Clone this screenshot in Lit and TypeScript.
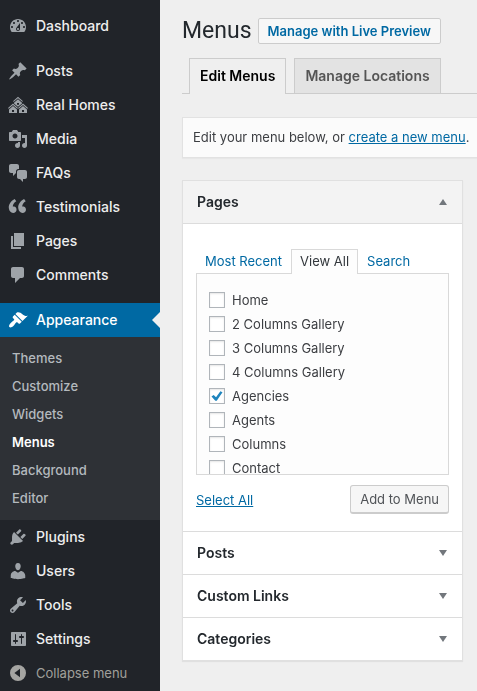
import { LitElement, html, css, svg, nothing } from "lit";
import { customElement, property, state } from "lit/decorators.js";
import { classMap } from "lit/directives/class-map.js";

const ICONS: Record<string, string> = {
  dashboard:
    "M3.76 16h12.48c1.1-1.37 1.76-3.11 1.76-5 0-4.42-3.58-8-8-8s-8 3.58-8 8c0 1.89.66 3.63 1.76 5zM10 4c.55 0 1 .45 1 1s-.45 1-1 1-1-.45-1-1 .45-1 1-1zM6 6c.55 0 1 .45 1 1s-.45 1-1 1-1-.45-1-1 .45-1 1-1zm8 0c.55 0 1 .45 1 1s-.45 1-1 1-1-.45-1-1 .45-1 1-1zm-5.37 5.55L12 7v6c0 1.1-.9 2-2 2s-2-.9-2-2c0-.57.24-1.08.63-1.45zM4 10c.55 0 1 .45 1 1s-.45 1-1 1-1-.45-1-1 .45-1 1-1zm12 0c.55 0 1 .45 1 1s-.45 1-1 1-1-.45-1-1 .45-1 1-1zm-5 3c0-.55-.45-1-1-1s-1 .45-1 1 .45 1 1 1 1-.45 1-1z",
  pin: "M10.44 3.02l1.82-1.82 6.36 6.35-1.83 1.82c-1.05-.68-2.48-.57-3.41.36l-.75.75c-.92.93-1.04 2.35-.35 3.41l-1.83 1.82-2.41-2.41-2.8 2.79c-.42.42-3.38 2.71-3.8 2.29s1.86-3.39 2.28-3.81l2.79-2.79L4.1 9.36l1.83-1.82c1.05.69 2.48.57 3.4-.36l.75-.75c.93-.92 1.05-2.35.36-3.41z",
  homes:
    "M14.27 6.87L10 3.14 5.73 6.87 5 6.14l5-4.38 5 4.38zM14 8.42l-4.05 3.43L6 8.38v-.74l4-3.5 4 3.5v.78zM11 9.7V8H9v1.7h2zm-1.73 4.03L5 10 .73 13.73 0 13l5-4.38L10 13zm10 0L15 10l-4.27 3.73L10 13l5-4.38L20 13zM5 11l4 3.5V18H1v-3.5zm10 0l4 3.5V18h-8v-3.5zm-9 6v-2H4v2h2zm10 0v-2h-2v2h2z",
  media:
    "M13 11V4c0-.55-.45-1-1-1h-1.67L9 1H5L3.67 3H2c-.55 0-1 .45-1 1v7c0 .55.45 1 1 1h10c.55 0 1-.45 1-1zM7 4.5c1.38 0 2.5 1.12 2.5 2.5S8.38 9.5 7 9.5 4.5 8.38 4.5 7 5.62 4.5 7 4.5zM14 6h5v10.5c0 1.38-1.12 2.5-2.5 2.5S14 17.88 14 16.5s1.12-2.5 2.5-2.5c.17 0 .34.02.5.05V9h-3V6zm-4 8.05V13h2v3.5c0 1.38-1.12 2.5-2.5 2.5S7 17.88 7 16.5 8.12 14 9.5 14c.17 0 .34.02.5.05z",
  chat: "M11 6h-.82C9.07 6 8 7.2 8 8.16V10l-3 3v-3H3c-1.1 0-2-.9-2-2V3c0-1.1.9-2 2-2h6c1.1 0 2 .9 2 2v3zm0 1h6c1.1 0 2 .9 2 2v5c0 1.1-.9 2-2 2h-2v3l-3-3h-1c-1.1 0-2-.9-2-2V9c0-1.1.9-2 2-2z",
  quote:
    "M8.54 12.74c0-.87-.24-1.61-.72-2.22-.73-.92-2.14-1.03-2.96-.85-.34-1.93 1.3-4.39 3.42-5.45L6.65 1.94C3.45 3.46.31 6.96.85 11.37 1.19 14.16 2.8 16 5.08 16c1 0 1.83-.29 2.48-.88.66-.59.98-1.38.98-2.38zm9.43 0c0-.87-.24-1.61-.72-2.22-.73-.92-2.14-1.03-2.96-.85-.34-1.93 1.3-4.39 3.42-5.45l-1.63-2.28c-3.2 1.52-6.34 5.02-5.8 9.43.34 2.79 1.95 4.63 4.23 4.63 1 0 1.83-.29 2.48-.88.66-.59.98-1.38.98-2.38z",
  page: "M6 15V2h10v13H6zm-1 1h8v2H3V5h2v11z",
  comment:
    "M5 2h9c1.1 0 2 .9 2 2v7c0 1.1-.9 2-2 2h-2l-5 5v-5H5c-1.1 0-2-.9-2-2V4c0-1.1.9-2 2-2z",
  brush:
    "M14.48 11.06L7.41 3.99l1.5-1.5c.5-.56 2.3-.47 3.51.32 1.21.8 1.43 1.28 2.91 2.1 1.18.64 2.45 1.26 4.45.85zm-.71.71L6.7 4.7 4.93 6.47c-.39.39-.39 1.02 0 1.41l1.06 1.06c.39.39.39 1.03 0 1.42-.6.6-1.43 1.11-2.21 1.69-.35.26-.7.53-1.01.84C1.43 14.23.4 16.08 1.4 17.07c.99 1 2.84-.03 4.18-1.36.31-.31.58-.66.85-1.02.57-.78 1.08-1.61 1.69-2.21.39-.39 1.02-.39 1.41 0l1.06 1.06c.39.39 1.02.39 1.41 0z",
  plug: "M13.11 4.36L9.87 7.6 8 5.73l3.24-3.24c.35-.34 1.05-.2 1.56.32.52.51.66 1.21.31 1.55zm-8 1.77l.91-1.12 9.01 9.01-1.19.84c-.71.71-2.63 1.16-3.82 1.16H6.14L4.9 17.26c-.59.59-1.54.59-2.12 0-.59-.58-.59-1.53 0-2.12l1.24-1.24v-3.88c0-1.13.4-3.19 1.09-3.89zm7.26 3.97l3.24-3.24c.34-.35 1.04-.21 1.55.31.52.51.66 1.21.31 1.55l-3.24 3.25z",
  user: "M10 9.25c-2.27 0-2.73-3.44-2.73-3.44C7 4.02 7.82 2 9.97 2c2.16 0 2.98 2.02 2.71 3.81 0 0-.41 3.44-2.68 3.44zm0 2.57L12.72 10c2.39 0 4.52 2.33 4.52 4.53v2.49s-3.65 1.13-7.24 1.13c-3.65 0-7.24-1.13-7.24-1.13v-2.49c0-2.25 1.94-4.48 4.47-4.48z",
  wrench:
    "M16.68 9.77c-1.34 1.34-3.3 1.67-4.95.99l-5.41 6.52c-.99.99-2.59.99-3.58 0s-.99-2.59 0-3.57l6.52-5.42c-.68-1.65-.35-3.61.99-4.95 1.28-1.28 3.12-1.62 4.72-1.06l-2.89 2.89 2.82 2.82 2.86-2.87c.53 1.58.18 3.39-1.08 4.65zM3.81 16.21c.4.39 1.04.39 1.43 0 .4-.4.4-1.04 0-1.43-.39-.4-1.03-.4-1.43 0-.39.39-.39 1.03 0 1.43z",
  sliders:
    "M18 16V4c0-.55-.45-1-1-1H4c-.55 0-1 .45-1 1v12c0 .55.45 1 1 1h13c.55 0 1-.45 1-1zM8 11h1c.55 0 1 .45 1 1s-.45 1-1 1H8v1.5c0 .28-.22.5-.5.5s-.5-.22-.5-.5V13H6c-.55 0-1-.45-1-1s.45-1 1-1h1V5.5c0-.28.22-.5.5-.5s.5.22.5.5V11zm5-2h-1c-.55 0-1-.45-1-1s.45-1 1-1h1V5.5c0-.28.22-.5.5-.5s.5.22.5.5V7h1c.55 0 1 .45 1 1s-.45 1-1 1h-1v5.5c0 .28-.22.5-.5.5s-.5-.22-.5-.5V9z",
  collapse:
    "M10 2a8 8 0 1 0 0 16 8 8 0 0 0 0-16zM12 5.8v8.4L6.4 10z",
};

const icon = (name: string) => svg`
  <svg class="icon" viewBox="0 0 20 20" aria-hidden="true">
    <path fill="currentColor" fill-rule="evenodd" d=${ICONS[name]}></path>
  </svg>`;

interface MenuEntry {
  label: string;
  icon: string;
  children?: string[];
}

const MENU: MenuEntry[][] = [
  [{ label: "Dashboard", icon: "dashboard" }],
  [
    { label: "Posts", icon: "pin" },
    { label: "Real Homes", icon: "homes" },
    { label: "Media", icon: "media" },
    { label: "FAQs", icon: "chat" },
    { label: "Testimonials", icon: "quote" },
    { label: "Pages", icon: "page" },
    { label: "Comments", icon: "comment" },
  ],
  [
    {
      label: "Appearance",
      icon: "brush",
      children: ["Themes", "Customize", "Widgets", "Menus", "Background", "Editor"],
    },
    { label: "Plugins", icon: "plug" },
    { label: "Users", icon: "user" },
    { label: "Tools", icon: "wrench" },
    { label: "Settings", icon: "sliders" },
  ],
];

@customElement("admin-menu")
class AdminMenu extends LitElement {
  static styles = css`
    :host {
      display: block;
      padding-top: 9px;
      background: #212429;
      color: #eee;
      font-size: 14px;
      font-weight: 500;
      line-height: 18px;
    }
    .group,
    .submenu {
      list-style: none;
      margin: 0;
      padding: 0;
    }
    .group + .group {
      margin-top: 11px;
    }
    .item {
      position: relative;
      display: flex;
      align-items: center;
      gap: 8px;
      box-sizing: border-box;
      width: 100%;
      height: 34px;
      padding: 0 8px;
      border: 0;
      background: none;
      color: inherit;
      font: inherit;
      text-align: left;
      text-decoration: none;
    }
    .icon {
      flex: none;
      width: 20px;
      height: 20px;
      color: #9ea3a8;
    }
    .current {
      background: #0069a3;
      color: #fff;
    }
    .current .icon {
      color: #fff;
    }
    .current::after {
      content: "";
      position: absolute;
      right: 0;
      border: 8px solid transparent;
      border-left: 0;
      border-right-color: #efefef;
    }
    .submenu {
      padding: 7px 0 8px;
      background: #2e3136;
      font-size: 13px;
    }
    .sublink {
      display: block;
      padding: 5px 12px;
      color: #b4b9be;
      text-decoration: none;
    }
    .sublink.active {
      color: #fff;
      font-weight: 600;
    }
    .collapse {
      color: #a0a09b;
      font-size: 13px;
      font-weight: 400;
    }
    .collapse .icon {
      color: #a5a5a2;
    }
  `;

  @property() active = "Menus";

  private entry(e: MenuEntry) {
    return html`<li>
      <a class=${classMap({ item: true, current: !!e.children })} href="#">
        ${icon(e.icon)}<span>${e.label}</span>
      </a>
      ${e.children
        ? html`<ul class="submenu">
            ${e.children.map(
              (c) => html`<li>
                <a class=${classMap({ sublink: true, active: c === this.active })} href="#">${c}</a>
              </li>`
            )}
          </ul>`
        : nothing}
    </li>`;
  }

  render() {
    return html`<nav aria-label="Main menu">
      ${MENU.map((g) => html`<ul class="group">${g.map((e) => this.entry(e))}</ul>`)}
      <button class="item collapse" type="button">${icon("collapse")}<span>Collapse menu</span></button>
    </nav>`;
  }
}

@customElement("pages-picker")
class PagesPicker extends LitElement {
  static styles = css`
    :host {
      display: block;
      padding: 25px 13px 17px;
      line-height: 16px;
    }
    .tabs {
      position: relative;
      display: flex;
      margin-bottom: -1px;
    }
    .tab {
      padding: 3px 8px 5px;
      border: 1px solid transparent;
      border-bottom: 0;
      background: none;
      color: #0069a3;
      font: inherit;
    }
    .tab.selected {
      border-color: #d9d9d9;
      background: #fdfdfd;
      color: #32373c;
    }
    .panel {
      box-sizing: border-box;
      height: 202px;
      padding: 14px 12px;
      border: 1px solid #d9d9d9;
      background: #fdfdfd;
      overflow-y: auto;
      scrollbar-width: none;
    }
    .option {
      display: flex;
      align-items: center;
      gap: 7px;
      height: 24px;
      color: #3c3e42;
    }
    .box {
      appearance: none;
      display: grid;
      place-items: center;
      box-sizing: border-box;
      flex: none;
      width: 16px;
      height: 16px;
      margin: 0;
      border: 1px solid #b0b5ba;
      background: #fff;
      box-shadow: inset 0 1px 2px rgba(0, 0, 0, 0.1);
    }
    .box:checked::before {
      content: "";
      width: 12px;
      height: 10px;
      background: #1e84bd;
      clip-path: polygon(4% 54%, 22% 40%, 42% 62%, 78% 2%, 96% 12%, 48% 98%, 36% 98%);
    }
    .actions {
      display: flex;
      align-items: center;
      justify-content: space-between;
      margin-top: 10px;
    }
    .link {
      color: #0069a3;
    }
    .add {
      height: 29px;
      padding: 0 9px;
      border: 1px solid #ccc;
      border-bottom-width: 2px;
      border-radius: 3px;
      background: #f6f6f6;
      color: #505357;
      font: inherit;
    }
  `;

  @state() private tab = "View All";
  @state() private checked = new Set(["Agencies"]);

  private pages = [
    "Home",
    "2 Columns Gallery",
    "3 Columns Gallery",
    "4 Columns Gallery",
    "Agencies",
    "Agents",
    "Columns",
    "Contact",
  ];

  private toggle(page: string) {
    const next = new Set(this.checked);
    if (!next.delete(page)) next.add(page);
    this.checked = next;
  }

  render() {
    return html`
      <div class="tabs" role="tablist">
        ${["Most Recent", "View All", "Search"].map(
          (t) => html`<button
            type="button"
            role="tab"
            aria-selected=${t === this.tab}
            class=${classMap({ tab: true, selected: t === this.tab })}
            @click=${() => (this.tab = t)}
          >${t}</button>`
        )}
      </div>
      <div class="panel" role="tabpanel">
        ${this.pages.map(
          (p) => html`<label class="option">
            <input
              class="box"
              type="checkbox"
              .checked=${this.checked.has(p)}
              @change=${() => this.toggle(p)}
            /><span>${p}</span>
          </label>`
        )}
      </div>
      <div class="actions">
        <a class="link" href="#">Select All</a>
        <button class="add" type="button">Add to Menu</button>
      </div>
    `;
  }
}

@customElement("app-root")
class AppRoot extends LitElement {
  static styles = css`
    :host {
      display: grid;
      grid-template-columns: 160px minmax(0, 1fr);
      min-height: 100vh;
      background: #efefef;
      color: #3c3e42;
      font-family: Inter, "Liberation Sans", sans-serif;
      font-size: 13px;
      line-height: 18px;
      overflow: hidden;
    }
    .main {
      padding: 16px 0 0 22px;
    }
    .heading {
      display: flex;
      align-items: center;
      gap: 6px;
    }
    .title {
      margin: 0;
      color: #23282d;
      font-family: Roboto, Inter, sans-serif;
      font-size: 23px;
      font-weight: 400;
      line-height: 30px;
    }
    .preview {
      padding: 3px 9px;
      border: 1px solid #ccc;
      border-radius: 2px;
      background: #f7f7f7;
      color: #0069a3;
      font-weight: 600;
      text-decoration: none;
    }
    .nav {
      display: flex;
      gap: 8px;
      margin-top: 12px;
      padding-left: 7px;
      border-bottom: 1px solid #ccc;
    }
    .nav-tab {
      padding: 8px 10px;
      border: 1px solid #ccc;
      border-bottom: 0;
      background: #e3e3e3;
      color: #555;
      font-size: 14px;
      font-weight: 600;
      text-decoration: none;
    }
    .nav-tab.selected {
      margin-bottom: -1px;
      padding-bottom: 9px;
      background: #efefef;
      color: #000;
    }
    .notice {
      margin-top: 23px;
      padding: 11px 10px;
      border: 1px solid #e2e2e2;
      border-right: 0;
      background: #fbfbfb;
      line-height: 17px;
      white-space: nowrap;
      box-shadow: 0 1px 1px rgba(0, 0, 0, 0.03);
    }
    .notice-text {
      margin: 0;
    }
    .link {
      color: #0069a3;
    }
    .accordion {
      margin: 22px 14px 30px 0;
      border: 1px solid #e0e0e0;
      background: #fff;
      box-shadow: 0 1px 1px rgba(0, 0, 0, 0.06);
    }
    .section + .section {
      border-top: 1px solid #dcdcdc;
    }
    .section-title {
      margin: 0;
      font-size: 14px;
    }
    .toggle {
      display: flex;
      align-items: center;
      justify-content: space-between;
      width: 100%;
      height: 42px;
      padding: 0 14px;
      border: 0;
      background: #fff;
      color: #23282d;
      font: inherit;
      font-weight: 600;
    }
    .toggle.open {
      height: 43px;
      border-bottom: 1px solid #dcdcdc;
      background: #f3f3f3;
    }
    .arrow {
      width: 10px;
      height: 6px;
      color: #72777c;
    }
    .open .arrow {
      transform: rotate(180deg);
    }
  `;

  @state() private open = "Pages";

  render() {
    return html`
      <admin-menu active="Menus"></admin-menu>
      <main class="main">
        <div class="heading">
          <h1 class="title">Menus</h1>
          <a class="preview" href="#">Manage with Live Preview</a>
        </div>
        <nav class="nav" aria-label="Menu screens">
          <a class="nav-tab selected" href="#" aria-current="page">Edit Menus</a>
          <a class="nav-tab" href="#">Manage Locations</a>
        </nav>
        <div class="notice">
          <p class="notice-text">Edit your menu below, or <a class="link" href="#">create a new menu</a>.</p>
        </div>
        <div class="accordion">
          ${["Pages", "Posts", "Custom Links", "Categories"].map((name) => {
            const open = name === this.open;
            return html`<section class="section">
              <h2 class="section-title">
                <button
                  type="button"
                  class=${classMap({ toggle: true, open })}
                  aria-expanded=${open}
                  @click=${() => (this.open = open ? "" : name)}
                >
                  <span>${name}</span>
                  <svg class="arrow" viewBox="0 0 10 6" aria-hidden="true">
                    <path fill="currentColor" d="M1 0h8L5 6z"></path>
                  </svg>
                </button>
              </h2>
              ${open && name === "Pages" ? html`<pages-picker></pages-picker>` : nothing}
            </section>`;
          })}
        </div>
      </main>
    `;
  }
}
